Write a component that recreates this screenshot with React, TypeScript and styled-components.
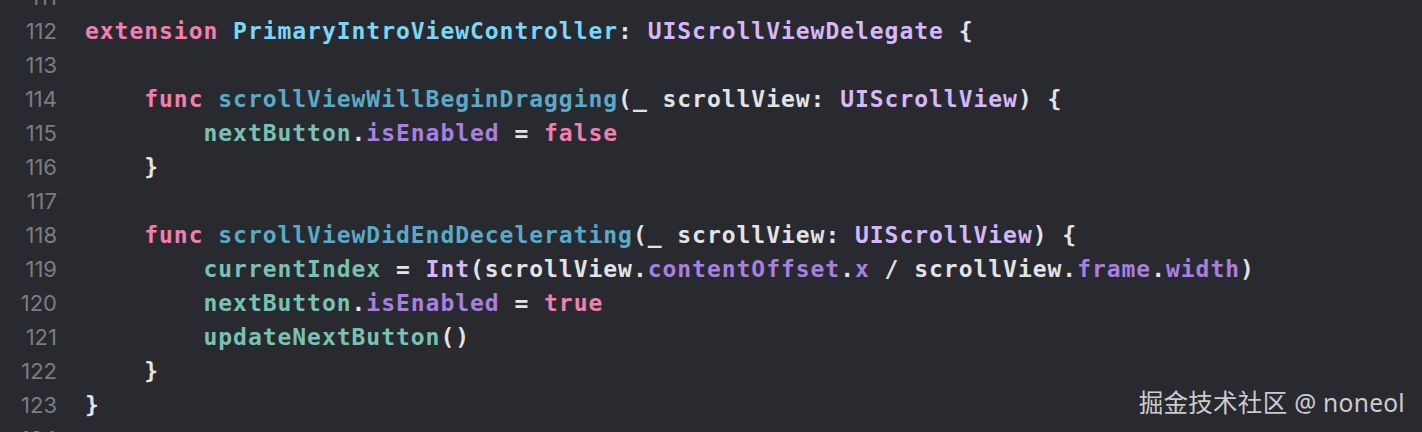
import React from "react";
import styled, { createGlobalStyle } from "styled-components";

const Global = createGlobalStyle`
  html, body { margin: 0; padding: 0; background: #292a2f; }
  body { width: 1422px; height: 432px; overflow: hidden; }
`;

type Kind = "plain" | "kw" | "typeDecl" | "funcDecl" | "type" | "prop" | "proj";

const colors: Record<Kind, string> = {
  plain: "#e3e3e5",
  kw: "#f27fb0",
  typeDecl: "#7bd7f8",
  funcDecl: "#5aaac7",
  type: "#d5b8fa",
  prop: "#a880e0",
  proj: "#79c2b2",
};

const Screen = styled.div`
  position: relative;
  width: 1422px;
  height: 432px;
  overflow: hidden;
  background: #292a2f;
`;

const Editor = styled.div`
  display: flex;
  flex-direction: column;
  margin-top: -20px;
`;

const Row = styled.div`
  display: flex;
  align-items: baseline;
  height: 34px;
  line-height: 34px;
`;

const Gutter = styled.span`
  width: 57px;
  flex: none;
  text-align: right;
  font-family: Inter, "Noto Sans", sans-serif;
  font-size: 22px;
  color: #7c7d81;
`;

const Code = styled.span`
  margin-left: 28px;
  white-space: pre;
  font-family: "DejaVu Sans Mono", monospace;
  font-weight: bold;
  font-size: 23px;
  letter-spacing: 0.96px;
`;

const Token = styled.span<{ $kind: Kind }>`
  color: ${(p) => colors[p.$kind]};
`;

const Watermark = styled.div`
  position: absolute;
  right: 17px;
  bottom: 13px;
  font-family: "Noto Sans", "Noto Sans CJK SC", sans-serif;
  font-size: 24.5px;
  color: rgba(235, 235, 237, 0.85);
  letter-spacing: 0.3px;
`;

type Tok = [Kind, string];

const lines: { n: number; toks: Tok[] }[] = [
  { n: 111, toks: [] },
  {
    n: 112,
    toks: [
      ["kw", "extension"],
      ["plain", " "],
      ["typeDecl", "PrimaryIntroViewController"],
      ["plain", ": "],
      ["type", "UIScrollViewDelegate"],
      ["plain", " {"],
    ],
  },
  { n: 113, toks: [] },
  {
    n: 114,
    toks: [
      ["plain", "    "],
      ["kw", "func"],
      ["plain", " "],
      ["funcDecl", "scrollViewWillBeginDragging"],
      ["plain", "(_ scrollView: "],
      ["type", "UIScrollView"],
      ["plain", ") {"],
    ],
  },
  {
    n: 115,
    toks: [
      ["plain", "        "],
      ["proj", "nextButton"],
      ["plain", "."],
      ["prop", "isEnabled"],
      ["plain", " = "],
      ["kw", "false"],
    ],
  },
  { n: 116, toks: [["plain", "    }"]] },
  { n: 117, toks: [] },
  {
    n: 118,
    toks: [
      ["plain", "    "],
      ["kw", "func"],
      ["plain", " "],
      ["funcDecl", "scrollViewDidEndDecelerating"],
      ["plain", "(_ scrollView: "],
      ["type", "UIScrollView"],
      ["plain", ") {"],
    ],
  },
  {
    n: 119,
    toks: [
      ["plain", "        "],
      ["proj", "currentIndex"],
      ["plain", " = "],
      ["type", "Int"],
      ["plain", "(scrollView."],
      ["prop", "contentOffset"],
      ["plain", "."],
      ["prop", "x"],
      ["plain", " / scrollView."],
      ["prop", "frame"],
      ["plain", "."],
      ["prop", "width"],
      ["plain", ")"],
    ],
  },
  {
    n: 120,
    toks: [
      ["plain", "        "],
      ["proj", "nextButton"],
      ["plain", "."],
      ["prop", "isEnabled"],
      ["plain", " = "],
      ["kw", "true"],
    ],
  },
  {
    n: 121,
    toks: [
      ["plain", "        "],
      ["proj", "updateNextButton"],
      ["plain", "()"],
    ],
  },
  { n: 122, toks: [["plain", "    }"]] },
  { n: 123, toks: [["plain", "}"]] },
  { n: 124, toks: [] },
];

export default function App() {
  return (
    <>
      <Global />
      <Screen>
        <Editor>
          {lines.map((l) => (
            <Row key={l.n}>
              <Gutter>{l.n}</Gutter>
              <Code>
                {l.toks.length === 0
                  ? " "
                  : l.toks.map(([k, t], i) => (
                      <Token key={i} $kind={k}>
                        {t}
                      </Token>
                    ))}
              </Code>
            </Row>
          ))}
        </Editor>
        <Watermark>掘金技术社区 @ noneol</Watermark>
      </Screen>
    </>
  );
}
